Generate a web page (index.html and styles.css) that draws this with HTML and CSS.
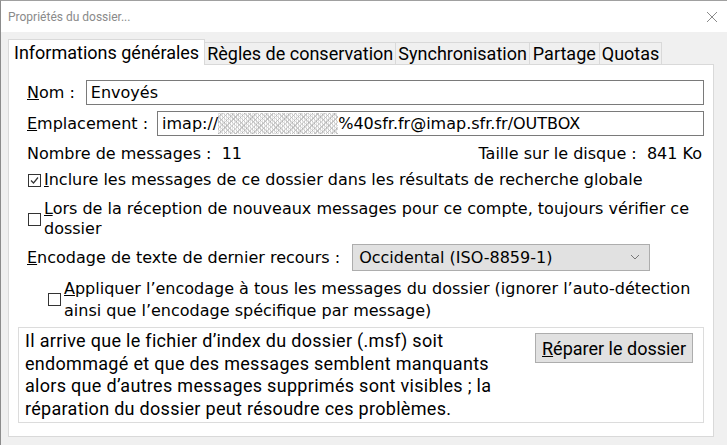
FILE: index.html
```html
<!DOCTYPE html>
<html lang="fr">
<head>
<meta charset="utf-8">
<title>Propriétés du dossier</title>
<link rel="stylesheet" href="styles.css">
</head>
<body>
<div class="window">
  <div class="titlebar">
    <span class="title">Propriétés du dossier...</span>
    <svg class="close" width="12" height="12" viewBox="0 0 12 12"><path d="M1 1 L11 11 M11 1 L1 11" stroke="#8a8a8a" stroke-width="1" fill="none"/></svg>
  </div>
  <div class="body">
    <div class="tabs">
      <div class="tab active">Informations générales</div>
      <div class="tab">Règles de conservation</div>
      <div class="tab">Synchronisation</div>
      <div class="tab">Partage</div>
      <div class="tab">Quotas</div>
    </div>
    <div class="panel">
      <div class="row field">
        <label class="lbl"><u>N</u>om :</label>
        <div class="input">Envoyés</div>
      </div>
      <div class="row field loc">
        <label class="lbl"><u>E</u>mplacement :</label>
        <div class="input">imap://<span class="blur"></span>%40sfr.fr@imap.sfr.fr/OUTBOX</div>
      </div>
      <div class="row stats">
        <span>Nombre de messages :&nbsp; 11</span>
        <span>Taille sur le disque :&nbsp; 841 Ko</span>
      </div>
      <div class="check one">
        <svg class="cb" width="13" height="13" viewBox="0 0 13 13"><rect x="0.5" y="0.5" width="12" height="12" fill="#fff" stroke="#333"/><path d="M3 6.5 L5.5 9 L10 3.5" stroke="#333" stroke-width="1.2" fill="none"/></svg>
        <span class="ctext"><u>I</u>nclure les messages de ce dossier dans les résultats de recherche globale</span>
      </div>
      <div class="check two">
        <svg class="cb" width="13" height="13" viewBox="0 0 13 13"><rect x="0.5" y="0.5" width="12" height="12" fill="#fff" stroke="#333"/></svg>
        <span class="ctext"><u>L</u>ors de la réception de nouveaux messages pour ce compte, toujours vérifier ce<br>dossier</span>
      </div>
      <div class="row enc">
        <label class="lbl"><u>E</u>ncodage de texte de dernier recours :</label>
        <div class="select">
          <span>Occidental (ISO-8859-1)</span>
          <svg width="10" height="6" viewBox="0 0 10 6"><path d="M1 1 L5 5 L9 1" stroke="#777" stroke-width="1" fill="none"/></svg>
        </div>
      </div>
      <div class="check three">
        <svg class="cb" width="13" height="13" viewBox="0 0 13 13"><rect x="0.5" y="0.5" width="12" height="12" fill="#fff" stroke="#333"/></svg>
        <span class="ctext"><u>A</u>ppliquer l’encodage à tous les messages du dossier (ignorer l’auto-détection<br>ainsi que l’encodage spécifique par message)</span>
      </div>
      <div class="repair">
        <p class="rtext">Il arrive que le fichier d’index du dossier (.msf) soit<br>endommagé et que des messages semblent manquants<br>alors que d’autres messages supprimés sont visibles ; la<br>réparation du dossier peut résoudre ces problèmes.</p>
        <button class="btn"><u>R</u>éparer le dossier</button>
      </div>
    </div>
  </div>
</div>
</body>
</html>
```

FILE: styles.css
```css
html, body {
  margin: 0;
  padding: 0;
}
body {
  width: 727px;
  height: 445px;
  overflow: hidden;
  background: #f0f0f0;
  font-family: "DejaVu Sans", Verdana, sans-serif;
  color: #000;
}
.window {
  height: 445px;
  box-sizing: border-box;
  border-left: 1px solid #8c8c8c;
  border-top: 1px solid #a0a0a0;
}
.titlebar {
  height: 31px;
  background: #fff;
  display: flex;
  align-items: center;
  justify-content: space-between;
  padding: 0 9px 0 7px;
}
.title {
  font-family: Roboto, "Liberation Sans", sans-serif;
  font-size: 12px;
  color: #8a8a8a;
}
.close {
  margin-top: 1px;
}
.body {
  padding: 8px 0 0 7px;
}
.tabs {
  display: flex;
  align-items: flex-end;
  height: 24px;
  font-family: Roboto, "Liberation Sans", sans-serif;
  font-size: 18px;
  position: relative;
  z-index: 1;
}
.tab {
  height: 22px;
  line-height: 21px;
  padding: 0 2px;
  border: 1px solid #d9d9d9;
  border-bottom: none;
  margin-right: -1px;
  background: #f0f0f0;
  box-sizing: border-box;
  white-space: nowrap;
}
.tab:nth-child(4) {
  padding: 0 3px;
}
.tab.active {
  height: 26px;
  line-height: 25px;
  background: #fff;
  padding: 0 5px;
  margin-bottom: -1px;
}
.panel {
  width: 706px;
  height: 373px;
  box-sizing: border-box;
  background: #fff;
  border: 1px solid #d9d9d9;
  padding: 15px 9px 0 18px;
  font-size: 16px;
}
.row {
  display: flex;
  align-items: center;
}
.field {
  height: 25px;
  margin-bottom: 6px;
  gap: 11px;
}
.field.loc {
  gap: 9px;
}
.lbl {
  white-space: nowrap;
}
.input {
  flex: 1;
  height: 25px;
  box-sizing: border-box;
  border: 1px solid #7a7a7a;
  padding: 0 4px;
  line-height: 23px;
  white-space: nowrap;
  overflow: hidden;
}
.blur {
  display: inline-block;
  width: 120px;
  height: 21px;
  vertical-align: middle;
  margin-top: -2px;
  background:
    repeating-linear-gradient(45deg, rgba(150,150,150,0.35) 0 1px, transparent 1px 3px),
    repeating-linear-gradient(-45deg, rgba(120,120,120,0.3) 0 1px, transparent 1px 4px),
    repeating-linear-gradient(90deg, rgba(200,200,200,0.5) 0 1px, transparent 1px 2px);
}
.stats {
  justify-content: space-between;
  height: 24px;
  margin-top: -1px;
  padding-right: 2px;
}
.check {
  display: flex;
  align-items: center;
  gap: 3px;
  line-height: 20px;
  white-space: nowrap;
}
.check.one {
  margin-left: 1px;
  margin-top: 4px;
  height: 22px;
}
.check.two {
  margin-left: 1px;
  margin-top: 8px;
}
.check.three {
  margin-left: 21px;
  margin-top: 7px;
  line-height: 21.5px;
}
.cb {
  flex: none;
}
.enc {
  height: 28px;
  margin-top: 4px;
  gap: 12px;
}
.select {
  width: 298px;
  height: 27px;
  box-sizing: border-box;
  background: #e1e1e1;
  border: 1px solid #adadad;
  display: flex;
  align-items: center;
  justify-content: space-between;
  padding: 0 9px 0 6px;
}
.repair {
  margin-top: 6px;
  margin-left: -9px;
  width: 686px;
  height: 96px;
  box-sizing: border-box;
  border: 1px solid #dcdcdc;
  display: flex;
  justify-content: space-between;
  align-items: flex-start;
  padding: 2px 10px 0 6px;
}
.rtext {
  margin: 0;
  white-space: nowrap;
  font-family: Roboto, "Liberation Sans", sans-serif;
  font-size: 18px;
  letter-spacing: 0.3px;
  line-height: 22.6px;
}
.btn {
  margin-top: 3px;
  height: 30px;
  padding: 0 6px;
  background: #e1e1e1;
  border: 1px solid #adadad;
  font-family: Roboto, "Liberation Sans", sans-serif;
  font-size: 18px;
  color: #000;
}
```
